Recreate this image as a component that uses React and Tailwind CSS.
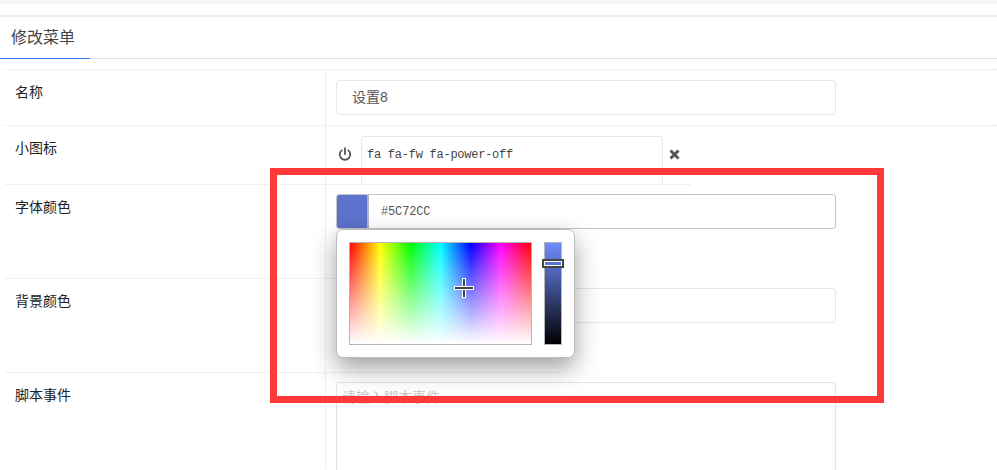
const sans = 'font-["Liberation_Sans","Noto_Sans_CJK_SC",sans-serif]';

function Row({ label, className, bodyClass = 'pt-[10px]', children }) {
  return (
    <div className={`flex border-b border-dotted border-[#e4e4e4] ${className}`}>
      <div className="w-[320px] shrink-0 pl-[10px] pt-[12px] text-[14px] leading-[20px] text-[#222]">{label}</div>
      <div className={`flex-1 border-l border-dotted border-[#e0e0e0] pl-[10px] ${bodyClass}`}>{children}</div>
    </div>
  );
}

function TextBox({ children, className = '' }) {
  return (
    <div className={`h-[35px] w-[500px] rounded-[3px] border border-[#e5e8ec] text-[14px] leading-[33px] text-[#555] ${className}`}>
      {children}
    </div>
  );
}

function ColorPopup() {
  return (
    <div className="absolute left-[336px] top-[229px] flex h-[129px] w-[239px] gap-[12px] rounded-[7px] border border-[#bdbdbd] bg-white pl-[12px] pt-[12px] shadow-[0_10px_24px_rgba(0,0,0,0.38)]">
      <div className="relative h-[103px] w-[183px] border border-[#b5b5b5] bg-[linear-gradient(to_top,#fff,rgba(255,255,255,0)),linear-gradient(to_right,#f00,#ff0,#0f0,#0ff,#00f,#f0f,#f00)]">
        <div className="absolute left-[104px] top-[35px] h-[20px] w-[20px]">
          <div className="absolute left-[8px] top-0 h-[20px] w-[4px] border border-white bg-[#444]" />
          <div className="absolute left-0 top-[8px] h-[4px] w-[20px] border border-white bg-[#444]" />
        </div>
      </div>
      <div className="relative h-[103px] w-[18px] border border-[#b5b5b5] bg-[linear-gradient(to_bottom,#708cff,#000)]">
        <div className="absolute left-[-3px] top-[16px] h-[9px] w-[22px] border-2 border-[#444] bg-[#5c72cc] shadow-[inset_0_0_0_1px_#fff]" />
      </div>
    </div>
  );
}

export default function App() {
  return (
    <div className={`relative h-[470px] w-[997px] overflow-hidden bg-white ${sans}`}>
      <div className="h-[4px] bg-[#f7f7f7]" />
      <div className="mt-[11px] h-[2px] bg-[#eeeeee]" />
      <div className="h-[42px] border-b border-[#dfdfee]">
        <div className="h-[42px] w-[90px] border-b border-[#2f7df6] pl-[11px] pt-[11px] text-[16px] leading-[20px] text-[#444]">
          修改菜单
        </div>
      </div>
      <div className="ml-[5px] mt-[10px] border-t border-dotted border-[#e4e4e4]">
        <Row label="名称" className="h-[56px]">
          <TextBox className="pl-[15px]">设置8</TextBox>
        </Row>
        <Row label="小图标" className="h-[59px] w-[686px]">
          <div className="flex items-start">
            <svg className="ml-[2px] mt-[11px] h-[14px] w-[14px]" viewBox="0 0 24 24" fill="none" stroke="#555" strokeWidth="3.2" strokeLinecap="round">
              <path d="M12 2v10" />
              <path d="M6.3 5.8a9 9 0 1 0 11.4 0" />
            </svg>
            <div className="ml-[9px] h-[47px] w-[302px] rounded-t-[3px] border border-b-0 border-[#e5e8ec] pl-[5px] pt-[9px] font-['Liberation_Mono',monospace] text-[12px] leading-[18px] tracking-[-0.25px] text-[#444]">
              fa fa-fw fa-power-off
            </div>
            <svg className="ml-[6px] mt-[13px] h-[11px] w-[11px]" viewBox="0 0 11 11" fill="none" stroke="#555" strokeWidth="3">
              <path d="M1.5 1.5l8 8M9.5 1.5l-8 8" />
            </svg>
          </div>
        </Row>
        <Row label="字体颜色" className="h-[94px] w-[555px]" bodyClass="pt-[9px]">
          <div className="flex h-[35px] w-[500px] rounded-[3px] border border-[#c4c4c4]">
            <div className="w-[32px] shrink-0 rounded-l-[2px] border-r-2 border-[#b0b4c8] bg-[#5c72cc]" />
            <div className="pl-[12px] pt-[1px] font-['Liberation_Mono',monospace] text-[12px] leading-[33px] tracking-[-0.15px] text-[#555]">#5C72CC</div>
          </div>
        </Row>
        <Row label="背景颜色" className="h-[94px] w-[555px]" bodyClass="pt-[9px]">
          <TextBox />
        </Row>
        <div className="flex h-[120px]">
          <div className="w-[320px] shrink-0 pl-[10px] pt-[12px] text-[14px] leading-[20px] text-[#222]">脚本事件</div>
          <div className="flex-1 border-l border-dotted border-[#e0e0e0] pl-[10px] pt-[9px]">
            <div className="h-[120px] w-[500px] rounded-[3px] border border-[#dfe5ea] pl-[5px] pt-[4px] text-[14px] leading-[20px] text-[#c8c8c8]">
              请输入脚本事件
            </div>
          </div>
        </div>
      </div>
      <ColorPopup />
      <div className="absolute left-[270px] top-[168px] h-[235px] w-[614px] border-[7px] border-[#ff3939]" />
    </div>
  );
}
